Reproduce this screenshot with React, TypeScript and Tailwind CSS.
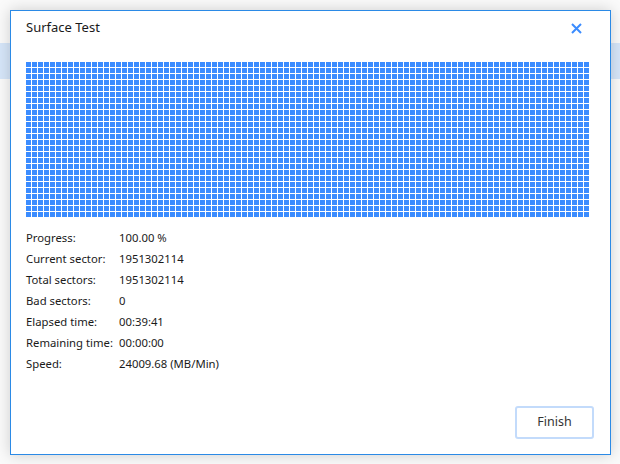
import React from 'react'

const stats: { label: string; value: string }[] = [
  { label: 'Progress:', value: '100.00 %' },
  { label: 'Current sector:', value: '1951302114' },
  { label: 'Total sectors:', value: '1951302114' },
  { label: 'Bad sectors:', value: '0' },
  { label: 'Elapsed time:', value: '00:39:41' },
  { label: 'Remaining time:', value: '00:00:00' },
  { label: 'Speed:', value: '24009.68 (MB/Min)' },
]

// Sector map: 94 x 26 blocks, 5px squares on a 6px pitch
function SectorMap() {
  return (
    <svg width="563" height="155" viewBox="0 0 563 155" className="block">
      <defs>
        <pattern id="blocks" width="6" height="6" patternUnits="userSpaceOnUse">
          <rect x="0" y="0" width="5" height="5" fill="#3b8cff" />
        </pattern>
      </defs>
      <rect x="0" y="0" width="563" height="155" fill="url(#blocks)" />
    </svg>
  )
}

function CloseIcon() {
  return (
    <svg width="11" height="11" viewBox="0 0 11 11" className="block">
      <path d="M1 1 L10 10 M10 1 L1 10" stroke="#3b8cff" strokeWidth="2" />
    </svg>
  )
}

export default function App() {
  return (
    <div
      className="relative h-[464px] w-[620px] overflow-hidden bg-[#fafafa]"
      style={{ fontFamily: '"Noto Sans", "Open Sans", sans-serif' }}
    >
      {/* app content behind the dialog */}
      <div className="pt-[43px]">
        <div className="h-[36px] bg-[#d6e6f9]" />
      </div>

      <div className="absolute left-[10px] top-[10px] flex h-[445px] w-[601px] flex-col border border-[#2b8ae6] bg-white shadow-[0_0_14px_rgba(0,0,0,0.18)]">
        <div className="flex h-[34px] items-center justify-between pl-[15px] pr-[28px]">
          <span className="text-[13px] text-[#1a1a1a]">Surface Test</span>
          <CloseIcon />
        </div>

        <div className="mt-[17px] pl-[15px]">
          <SectorMap />
        </div>

        <div className="mt-[11px] flex flex-col pl-[15px] text-[11.3px] text-[#1a1a1a]">
          {stats.map((s) => (
            <div key={s.label} className="flex h-[21px] items-center">
              <span className="w-[93px] shrink-0">{s.label}</span>
              <span>{s.value}</span>
            </div>
          ))}
        </div>

        <div className="mt-auto flex justify-end pb-[15px] pr-[16px]">
          <button className="h-[33px] w-[79px] rounded-[3px] border-2 border-[#c3dbfb] bg-white text-[12.5px] text-[#333]">
            Finish
          </button>
        </div>
      </div>
    </div>
  )
}
